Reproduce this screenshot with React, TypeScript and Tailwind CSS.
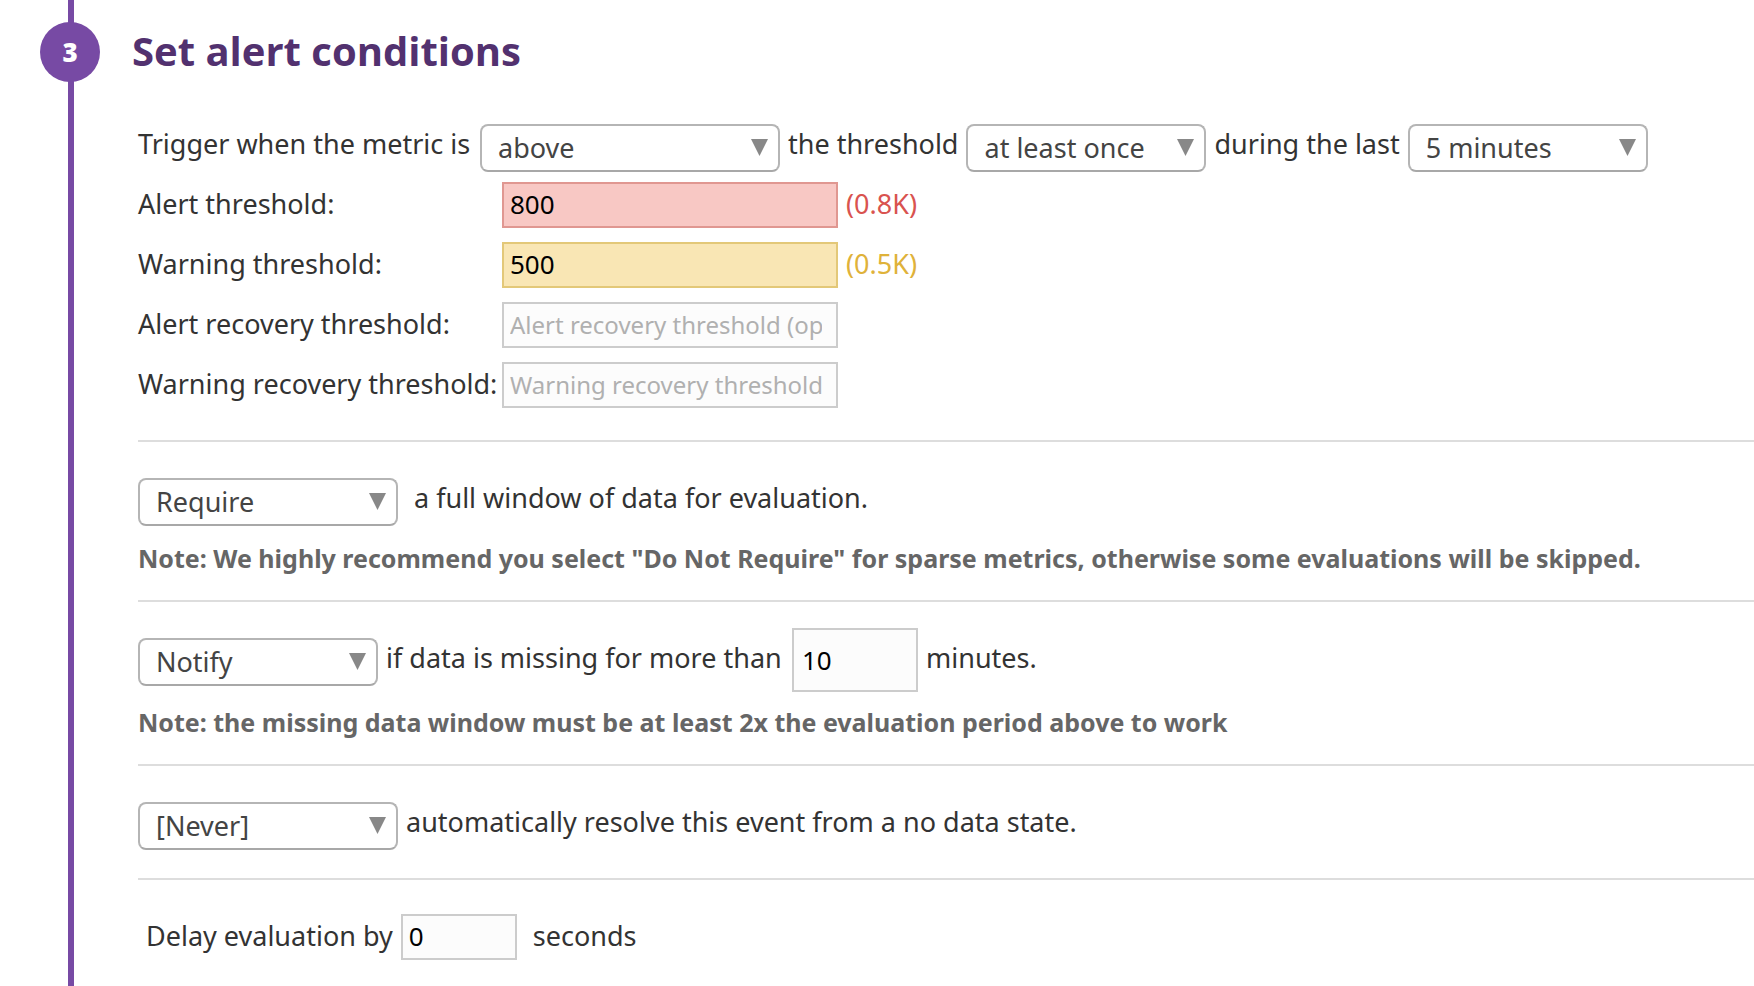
import { useState, type ReactNode } from "react";

type SelectBoxProps = {
  id: string;
  options: string[];
  width: string;
  ariaLabel?: string;
};

function SelectBox({ id, options, width, ariaLabel }: SelectBoxProps) {
  const [value, setValue] = useState(options[0]);
  return (
    <span className={`relative block h-12 shrink-0 ${width}`}>
      <select
        id={id}
        aria-label={ariaLabel}
        value={value}
        onChange={(e) => setValue(e.target.value)}
        className="block h-12 w-full appearance-none rounded-lg border-2 border-[#b5b5b5] border-b-[#a8a8a8] bg-white pr-10 pl-4 text-[27px] text-[#444]"
      >
        {options.map((option) => (
          <option key={option}>{option}</option>
        ))}
      </select>
      <svg
        viewBox="0 0 17 17"
        aria-hidden="true"
        className="pointer-events-none absolute top-[15px] right-3 size-[17px] fill-[#888]"
      >
        <path d="M0 0H17L8.5 17Z" />
      </svg>
    </span>
  );
}

type ThresholdRowProps = {
  id: string;
  label: string;
  value?: string;
  placeholder?: string;
  tone?: string;
  hint?: ReactNode;
};

function ThresholdRow({
  id,
  label,
  value = "",
  placeholder,
  tone = "border-[#ccc] bg-[#fcfcfc]",
  hint,
}: ThresholdRowProps) {
  return (
    <div className="flex items-start leading-11">
      <label htmlFor={id} className="w-[364px] shrink-0 whitespace-nowrap">
        {label}
      </label>
      <input
        id={id}
        type="text"
        defaultValue={value}
        placeholder={placeholder}
        className={`h-[46px] w-[336px] border-2 pr-3.5 pb-0.5 pl-1.5 text-[26px] text-black placeholder:text-2xl placeholder:text-[#b0b0b0] ${tone}`}
      />
      {hint}
    </div>
  );
}

export default function App() {
  return (
    <main className="flex min-h-screen bg-white font-['Noto_Sans','Open_Sans',sans-serif] text-[27px] leading-10 text-[#333]">
      <div className="relative ml-10 w-[60px] shrink-0">
        <div className="ml-7 h-full w-1.5 bg-[#774aa4]" />
        <span className="absolute top-[22px] left-0 flex size-[60px] items-center justify-center rounded-full bg-[#774aa4] font-['Open_Sans','Noto_Sans',sans-serif] text-[26px] font-extrabold text-white">
          3
        </span>
      </div>

      <form className="min-w-0 flex-1" onSubmit={(e) => e.preventDefault()}>
        <h2 className="mt-6 ml-8 font-['Open_Sans','Noto_Sans',sans-serif] text-[40px] leading-[54px] font-bold text-[#52316f]">
          Set alert conditions
        </h2>

        <div className="ml-[38px]">
          <section className="border-b-2 border-[#ddd] pt-[46px] pb-8">
            <div className="flex items-start gap-2 whitespace-nowrap">
              <label htmlFor="comparison" className="min-w-[334px]">Trigger when the metric is</label>
              <SelectBox id="comparison" width="w-[300px]" options={["above", "above or equal to", "below", "below or equal to"]} />
              <label htmlFor="occurrence">the threshold</label>
              <SelectBox id="occurrence" width="w-60" options={["at least once", "at all times", "on average", "in total"]} />
              <label htmlFor="timeframe">during the last</label>
              <SelectBox id="timeframe" width="w-60" options={["5 minutes", "10 minutes", "15 minutes", "30 minutes", "1 hour"]} />
            </div>

            <div className="mt-2.5 flex flex-col gap-3.5">
              <ThresholdRow
                id="alert"
                label="Alert threshold:"
                value="800"
                tone="border-[#e09791] bg-[#f8c8c4]"
                hint={<output htmlFor="alert" className="ml-2 text-[#d9534f]">(0.8K)</output>}
              />
              <ThresholdRow
                id="warning"
                label="Warning threshold:"
                value="500"
                tone="border-[#e3c878] bg-[#f9e6b4]"
                hint={<output htmlFor="warning" className="ml-2 text-[#dfb23a]">(0.5K)</output>}
              />
              <ThresholdRow id="alert-recovery" label="Alert recovery threshold:" placeholder="Alert recovery threshold (optional)" />
              <ThresholdRow id="warning-recovery" label="Warning recovery threshold:" placeholder="Warning recovery threshold (optional)" />
            </div>
          </section>

          <section className="border-b-2 border-[#ddd] pt-9 pb-[22px]">
            <div className="flex items-start gap-4">
              <SelectBox id="full-window" width="w-[260px]" options={["Require", "Do Not Require"]} />
              <label htmlFor="full-window">a full window of data for evaluation.</label>
            </div>
            <p className="mt-3 text-[25px] leading-10 font-bold text-[#666]">
              Note: We highly recommend you select "Do Not Require" for sparse metrics, otherwise some evaluations will be skipped.
            </p>
          </section>

          <section className="border-b-2 border-[#ddd] pt-[26px] pb-[22px]">
            <div className="flex items-start gap-2">
              <div className="flex gap-2 pt-2.5">
                <SelectBox id="no-data" ariaLabel="Missing data action" width="w-60" options={["Notify", "Do not notify"]} />
                <label htmlFor="no-data-minutes" className="min-w-[398px]">if data is missing for more than</label>
              </div>
              <input id="no-data-minutes" type="text" defaultValue="10" className="h-16 w-[126px] border-2 border-[#ccc] bg-[#fcfcfc] px-2 text-[26px] text-black" />
              <span className="pt-2.5">minutes.</span>
            </div>
            <p className="mt-2.5 text-[25px] leading-10 font-bold text-[#666]">
              Note: the missing data window must be at least 2x the evaluation period above to work
            </p>
          </section>

          <section className="border-b-2 border-[#ddd] pt-9 pb-7">
            <div className="flex items-start gap-2">
              <SelectBox id="auto-resolve" width="w-[260px]" options={["[Never]", "After 1 hour", "After 2 hours", "After 4 hours"]} />
              <label htmlFor="auto-resolve">automatically resolve this event from a no data state.</label>
            </div>
          </section>

          <section className="flex items-start pt-[34px] pl-2 leading-11">
            <label htmlFor="delay">Delay evaluation by</label>
            <input id="delay" type="text" defaultValue="0" className="ml-2 h-[46px] w-[116px] border-2 border-[#ccc] bg-[#fcfcfc] px-1.5 pb-0.5 text-[26px] text-black" />
            <span className="ml-4">seconds</span>
          </section>
        </div>
      </form>
    </main>
  );
}
